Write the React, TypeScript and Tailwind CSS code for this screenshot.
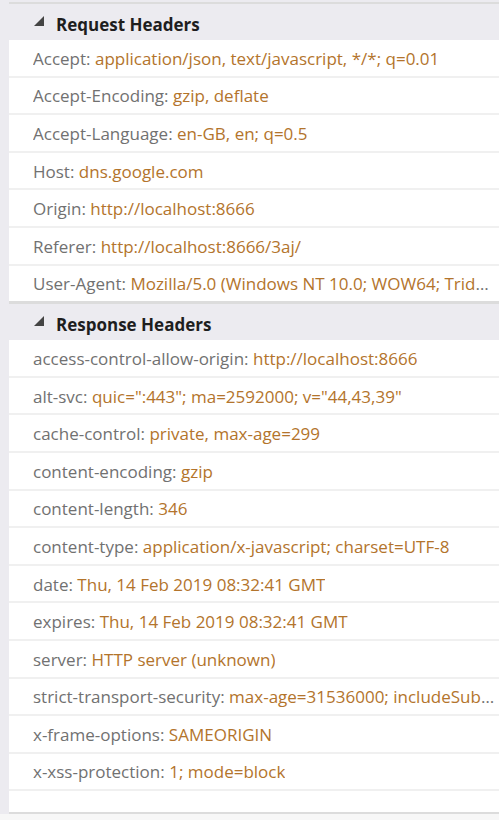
import React from 'react';

const requestHeaders: [string, string][] = [
  ['Accept', 'application/json, text/javascript, */*; q=0.01'],
  ['Accept-Encoding', 'gzip, deflate'],
  ['Accept-Language', 'en-GB, en; q=0.5'],
  ['Host', 'dns.google.com'],
  ['Origin', 'http://localhost:8666'],
  ['Referer', 'http://localhost:8666/3aj/'],
  ['User-Agent', 'Mozilla/5.0 (Windows NT 10.0; WOW64; Trident/7.0; rv:11.0) like Gecko'],
];

const responseHeaders: [string, string][] = [
  ['access-control-allow-origin', 'http://localhost:8666'],
  ['alt-svc', 'quic=":443"; ma=2592000; v="44,43,39"'],
  ['cache-control', 'private, max-age=299'],
  ['content-encoding', 'gzip'],
  ['content-length', '346'],
  ['content-type', 'application/x-javascript; charset=UTF-8'],
  ['date', 'Thu, 14 Feb 2019 08:32:41 GMT'],
  ['expires', 'Thu, 14 Feb 2019 08:32:41 GMT'],
  ['server', 'HTTP server (unknown)'],
  ['strict-transport-security', 'max-age=31536000; includeSubDomains; preload'],
  ['x-frame-options', 'SAMEORIGIN'],
  ['x-xss-protection', '1; mode=block'],
];

const Triangle = () => (
  <svg width="10" height="10" viewBox="0 0 10 10" className="-mt-[3px] shrink-0">
    <polygon points="10,0 10,10 0,10" fill="#444444" />
  </svg>
);

const SectionHeader = ({ title }: { title: string }) => (
  <div className="flex h-[36px] items-center gap-[12px] bg-[#ecebf0] pl-[25px]">
    <Triangle />
    <span className="mt-[5px] text-[17px] font-bold text-[#1e1e1e]">{title}</span>
  </div>
);

const HeaderRow = ({ name, value }: { name: string; value: string }) => (
  <div className="flex h-[35.6px] items-center bg-white pl-[24px] pr-[2px] pt-[2px]">
    <span className="truncate text-[17px] leading-[22px] text-[#717171]">
      {name}: <span className="text-[#b3742c]">{value}</span>
    </span>
  </div>
);

export default function App() {
  return (
    <div
      className="flex h-[820px] w-[499px] flex-col overflow-hidden bg-[#f7f7f7]"
      style={{ fontFamily: '"Open Sans", "Noto Sans", sans-serif' }}
    >
      <div className="flex flex-1 flex-col bg-[#ecebf0] pl-[9px] pt-[2px]">
        <div className="h-[2px] bg-[#dcdcdc]" />
        <SectionHeader title="Request Headers" />
        <div className="flex flex-col gap-[2px] bg-[#f0f0f0]">
          {requestHeaders.map(([n, v]) => (
            <HeaderRow key={n} name={n} value={v} />
          ))}
        </div>
        <div className="h-[3px] bg-[#dcdcdc]" />
        <SectionHeader title="Response Headers" />
        <div className="flex flex-col gap-[2px] bg-[#f0f0f0] pb-[2px]">
          {responseHeaders.map(([n, v]) => (
            <HeaderRow key={n} name={n} value={v} />
          ))}
        </div>
        <div className="flex-1 bg-white" />
        <div className="h-[2px] bg-[#dcdcdc]" />
      </div>
      <div className="h-[6px] bg-[#f7f7f7]" />
    </div>
  );
}
